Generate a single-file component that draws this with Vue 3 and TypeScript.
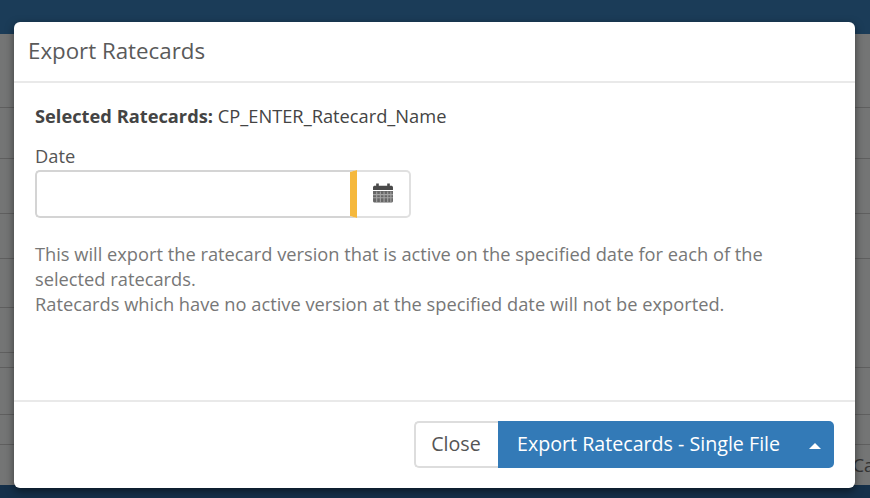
<script setup lang="ts">
// heights of the table rows behind the dialog; short ones only show on the left
const rows = [
  { height: 51, short: false },
  { height: 55, short: false },
  { height: 45, short: false },
  { height: 49, short: false },
  { height: 45, short: true },
  { height: 15, short: true },
  { height: 47, short: false },
  { height: 30, short: false },
  { height: 41, short: false, cell: 'Ca' },
]
</script>

<template>
  <div class="page">
    <div class="topbar"></div>
    <div class="table">
      <div
        v-for="(r, i) in rows"
        :key="i"
        class="row"
        :class="{ 'row--short': r.short }"
        :style="{ height: r.height + 'px' }"
      >
        <span v-if="r.cell" class="cell">{{ r.cell }}</span>
      </div>
    </div>
    <div class="footbar"></div>

    <div class="modal">
      <div class="modal__header">Export Ratecards</div>
      <div class="modal__body">
        <p class="selected"><strong>Selected Ratecards:</strong> CP_ENTER_Ratecard_Name</p>
        <label class="label">Date</label>
        <div class="date">
          <input class="date__input" type="text" />
          <button class="date__btn" type="button">
            <svg width="20" height="21" viewBox="0 0 19 20">
              <path d="M0 5C0 4 .8 3.500 1.500 3.500H3V1.500h2.500v2h8v-2H16v2h1.500c.7 0 1.500.5 1.500 1.500V7.500H0z" fill="#4a4a4a" />
              <path d="M0 8.500h19v9.500c0 1-.8 1.500-1.500 1.500h-16C.8 19.500 0 19 0 18z" fill="#666" />
              <path d="M3.500 9v10M7 9v10M10.500 9v10M14 9v10M17 9v10M0 12h19M0 15h19" stroke="#a5a5a5" stroke-width="1" fill="none" />
            </svg>
          </button>
        </div>
        <p class="help">
          This will export the ratecard version that is active on the specified date for each of the selected ratecards.<br />
          Ratecards which have no active version at the specified date will not be exported.
        </p>
      </div>
      <div class="modal__footer">
        <div class="btn-group">
          <button class="btn btn--close" type="button">Close</button>
          <button class="btn btn--primary" type="button">
            Export Ratecards - Single File
            <span class="caret"></span>
          </button>
        </div>
      </div>
    </div>
  </div>
</template>

<style>
html, body { margin: 0; padding: 0; }
</style>

<style scoped>
.page {
  position: relative;
  width: 870px;
  height: 498px;
  overflow: hidden;
  display: flex;
  flex-direction: column;
  background: #747575;
  font-family: "Open Sans", sans-serif;
}
.topbar { height: 34px; background: #1b3c58; flex: none; }
.table { flex: 1; padding-top: 73px; overflow: hidden; }
.row {
  box-sizing: border-box;
  border-top: 1px solid #5f5f5f;
  display: flex;
  justify-content: flex-end;
  align-items: center;
}
.row--short {
  border-top-color: transparent;
  background: linear-gradient(#5f5f5f, #5f5f5f) no-repeat 0 0 / 14px 1px;
  background-origin: border-box;
}
.cell { color: #333; font-size: 18px; margin-right: -4px; }
.footbar { height: 13px; background: #15304a; flex: none; }
.modal {
  position: absolute;
  left: 14px;
  top: 22px;
  width: 841px;
  height: 466px;
  background: #fff;
  border-radius: 6px;
  display: flex;
  flex-direction: column;
  box-shadow: 0 3px 9px rgba(0, 0, 0, 0.5);
}
.modal__header {
  height: 61px;
  box-sizing: border-box;
  padding: 15px 15px 0 14px;
  border-bottom: 2px solid #e9e9e9;
  font-size: 22.3px;
  line-height: 28px;
  color: #5a5a5a;
}
.modal__body {
  flex: 1;
  padding: 21px 21px 0;
  color: #444;
  font-size: 18.28px;
}
.selected { margin: 0; line-height: 24px; }
.selected strong { color: #444; }
.label { display: block; margin-top: 16px; line-height: 24px; color: #555; }
.date { display: flex; width: 376px; height: 48px; margin-top: 2px; }
.date__input {
  flex: 1;
  min-width: 0;
  box-sizing: border-box;
  border: 2px solid #d4d4d4;
  border-right: 7px solid #f5b83d;
  border-radius: 5px 0 0 5px;
  outline: none;
}
.date__btn {
  width: 54px;
  padding: 0 0 3px;
  background: #fff;
  border: 2px solid #e0e0e0;
  border-left: none;
  border-radius: 0 5px 5px 0;
  display: flex;
  align-items: center;
  justify-content: center;
}
.help {
  margin: 23px 0 0;
  width: 745px;
  line-height: 25px;
  color: #777;
}
.modal__footer {
  height: 88px;
  box-sizing: border-box;
  border-top: 2px solid #e9e9e9;
  padding: 19px 21px 0;
  display: flex;
  justify-content: flex-end;
}
.btn-group { display: flex; height: 47px; }
.btn {
  font-family: inherit;
  font-size: 19.65px;
  cursor: pointer;
}
.btn--close {
  width: 84px;
  padding: 0 2px 2px 0;
  background: #fff;
  color: #555;
  border: 2px solid #ddd;
  border-right: none;
  border-radius: 5px 0 0 5px;
}
.btn--primary {
  width: 336px;
  background: #337ab7;
  color: #fff;
  border: none;
  border-radius: 0 5px 5px 0;
  display: flex;
  align-items: center;
  justify-content: space-between;
  padding: 0 13px 2px 19px;
}
.caret {
  width: 0;
  height: 0;
  margin-top: 4px;
  border-left: 6px solid transparent;
  border-right: 6px solid transparent;
  border-bottom: 6px solid #fff;
}
</style>
